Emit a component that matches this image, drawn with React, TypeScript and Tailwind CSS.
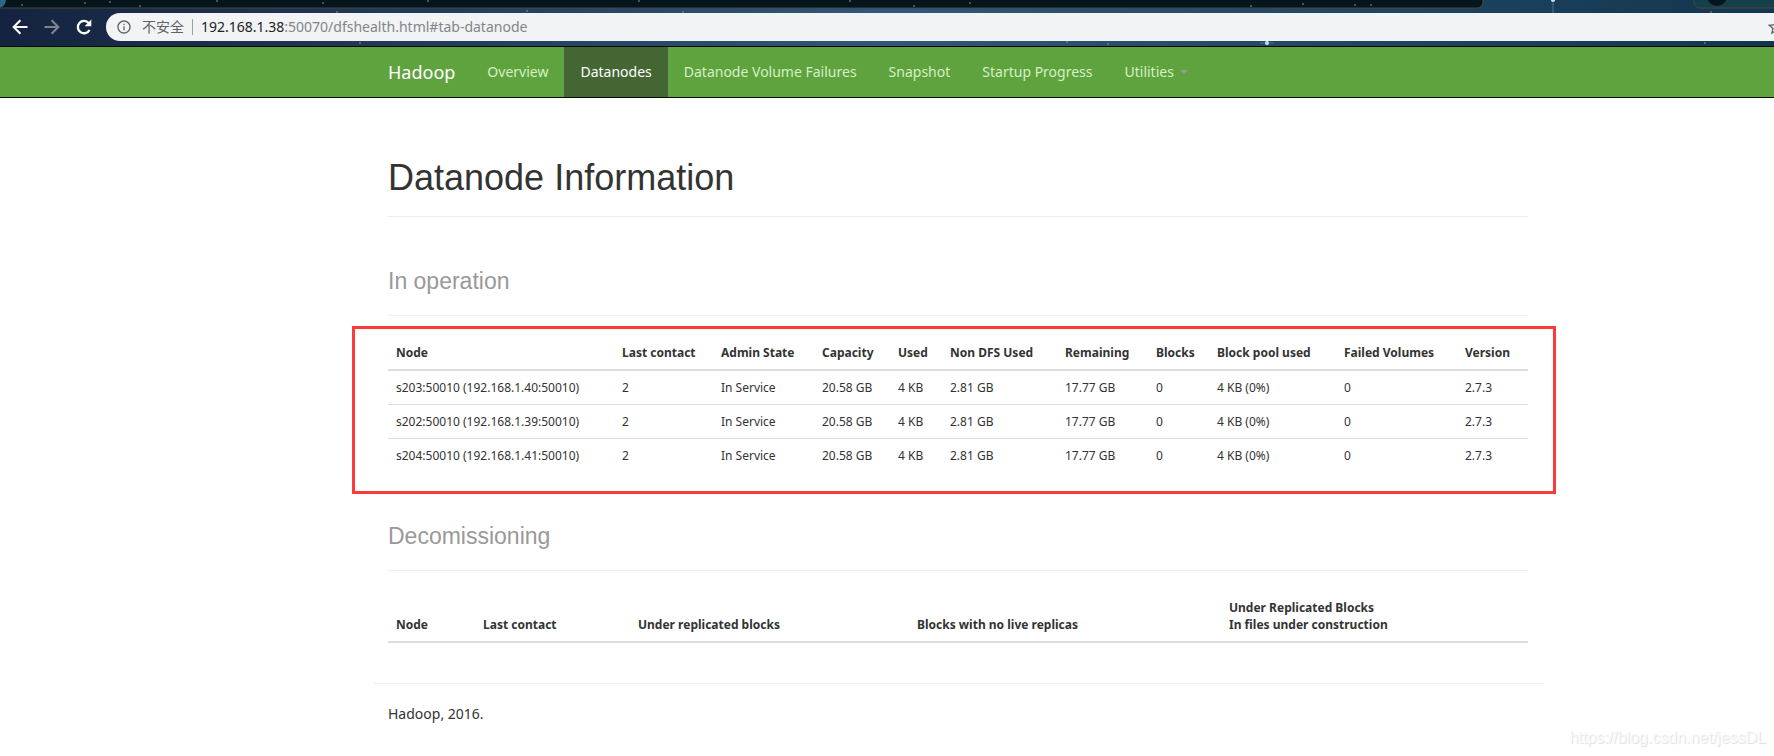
import clsx from 'clsx';

interface Star {
  x: number;
  y: number;
  r: number;
}

const stars: Star[] = [
  { x: 22, y: 5, r: 1 },
  { x: 85, y: 3, r: 1 },
  { x: 110, y: 2, r: 1 },
  { x: 140, y: 6, r: 1 },
  { x: 217, y: 1, r: 1 },
  { x: 323, y: 3, r: 1 },
  { x: 337, y: 12, r: 1 },
  { x: 360, y: 43, r: 1 },
  { x: 428, y: 1, r: 1 },
  { x: 527, y: 11, r: 1 },
  { x: 639, y: 1, r: 1 },
  { x: 683, y: 12, r: 1 },
  { x: 850, y: 1, r: 1 },
  { x: 914, y: 6, r: 1 },
  { x: 970, y: 3, r: 1 },
  { x: 1067, y: 42, r: 1 },
  { x: 1108, y: 44, r: 1 },
  { x: 1251, y: 6, r: 1 },
  { x: 1303, y: 4, r: 1 },
  { x: 1355, y: 5, r: 1 },
  { x: 1371, y: 5, r: 1 },
  { x: 1711, y: 12, r: 1 },
  { x: 1705, y: 43, r: 1 },
];

const navItems = [
  { label: 'Overview', href: '#tab-overview' },
  { label: 'Datanodes', href: '#tab-datanode' },
  { label: 'Datanode Volume Failures', href: '#tab-datanode-volume-failures' },
  { label: 'Snapshot', href: '#tab-snapshot' },
  { label: 'Startup Progress', href: '#tab-startup-progress' },
];

const operationColumns = [
  { label: 'Node', width: 'w-[226px]' },
  { label: 'Last contact', width: 'w-[99px]' },
  { label: 'Admin State', width: 'w-[101px]' },
  { label: 'Capacity', width: 'w-[76px]' },
  { label: 'Used', width: 'w-[52px]' },
  { label: 'Non DFS Used', width: 'w-[115px]' },
  { label: 'Remaining', width: 'w-[91px]' },
  { label: 'Blocks', width: 'w-[61px]' },
  { label: 'Block pool used', width: 'w-[127px]' },
  { label: 'Failed Volumes', width: 'w-[121px]' },
  { label: 'Version', width: 'w-[71px]' },
];

const nodes = [
  's203:50010 (192.168.1.40:50010)',
  's202:50010 (192.168.1.39:50010)',
  's204:50010 (192.168.1.41:50010)',
];

const nodeStats = ['2', 'In Service', '20.58 GB', '4 KB', '2.81 GB', '17.77 GB', '0', '4 KB (0%)', '0', '2.7.3'];

const decommissionColumns = [
  { label: 'Node', width: 'w-[87px]' },
  { label: 'Last contact', width: 'w-[155px]' },
  { label: 'Under replicated blocks', width: 'w-[279px]' },
  { label: 'Blocks with no live replicas', width: 'w-[312px]' },
  { label: 'Under Replicated Blocks\nIn files under construction', width: 'w-[307px]' },
];

function BrowserBar() {
  return (
    <div className="relative overflow-hidden bg-linear-to-r from-[#14233f] via-[#30587a] to-[#12364f]">
      {/* Night sky theme behind the tabs and toolbar */}
      <svg className="absolute inset-0 h-full w-full" aria-hidden="true">
        <rect x="-10" y="-10" width="1493" height="18" rx="6" fill="#04151c" stroke="#4a4644" />
        <rect x="1694" y="-10" width="200" height="18" rx="6" fill="#14404a" stroke="#4a4644" />
        <circle cx="1717" cy="-4" r="10" fill="#04151c" />
        <circle cx="-2" cy="0" r="8" fill="#2f6683" />
        {stars.map((star) => (
          <circle key={`${star.x}-${star.y}`} cx={star.x} cy={star.y} r={star.r} fill="#8a8f78" opacity="0.7" />
        ))}
        <circle cx="1553" cy="0" r="2" fill="#e6f4fb" />
        <circle cx="1267" cy="43" r="2" fill="#e6f4fb" />
        <path d="M1260 43h14M1553 0v13" stroke="#6f9fbd" strokeWidth="1" opacity="0.5" />
      </svg>
      <div className="relative flex items-center pt-[13px] pb-[5px]">
        <div className="flex w-[106px] items-center gap-3 pl-[10px]">
          <button type="button" aria-label="Back" className="text-white">
            <svg className="h-5 w-5" viewBox="0 0 24 24" fill="none" stroke="currentColor" strokeWidth="2.6">
              <path d="M21 12H5M12.5 4L4.5 12l8 8" />
            </svg>
          </button>
          <button type="button" aria-label="Forward" className="text-[#7d8390]">
            <svg className="h-5 w-5" viewBox="0 0 24 24" fill="none" stroke="currentColor" strokeWidth="2.6">
              <path d="M3 12h16M11.5 4l8 8-8 8" />
            </svg>
          </button>
          <button type="button" aria-label="Reload" className="text-white">
            <svg className="h-5 w-5" viewBox="0 0 24 24" fill="none" stroke="currentColor" strokeWidth="2.8">
              <path d="M18.6 15.5A7.4 7.4 0 1 1 17.6 7.2L19 8.6" />
              <path d="M20.8 3v8h-8z" fill="currentColor" stroke="none" />
            </svg>
          </button>
        </div>
        <div className="flex h-7 flex-1 items-center overflow-hidden rounded-l-full bg-[#f1f3f4] pl-[10px] text-sm whitespace-nowrap">
          <svg className="h-4 w-4 text-[#5f6368]" viewBox="0 0 24 24" fill="currentColor">
            <path d="M11 17h2v-6h-2v6zm1-15C6.48 2 2 6.48 2 12s4.48 10 10 10 10-4.48 10-10S17.52 2 12 2zm0 18c-4.41 0-8-3.59-8-8s3.59-8 8-8 8 3.59 8 8-3.59 8-8 8zM11 9h2V7h-2v2z" />
          </svg>
          <span className="ml-[10px] text-[#5f6368]">不安全</span>
          <span className="mx-2 h-4 w-px bg-[#9aa0a6]" />
          <span className="text-[#202124]">192.168.1.38</span>
          <span className="text-[#80868b]">:50070/dfshealth.html#tab-datanode</span>
        </div>
        <button type="button" aria-label="Bookmark" className="h-7 w-2 overflow-hidden bg-[#f1f3f4] text-[#5f6368]">
          <svg className="h-5 w-5" viewBox="0 0 24 24" fill="currentColor">
            <path d="M22 9.24l-7.19-.62L12 2 9.19 8.63 2 9.24l5.46 4.73L5.82 21 12 17.27 18.18 21l-1.63-7.03L22 9.24zM12 15.4l-3.76 2.27 1-4.28-3.32-2.88 4.38-.38L12 6.1l1.71 4.04 4.38.38-3.32 2.88 1 4.28L12 15.4z" />
          </svg>
        </button>
      </div>
    </div>
  );
}

function Navbar() {
  return (
    <nav className="border-y border-[#080808] bg-[#5fa33e] pl-[142px]">
      <div className="mx-auto flex max-w-[1170px] text-sm leading-5 text-[#d4f0c6]">
        <a href="#top" className="py-[15px] pr-4 pl-[15px] text-lg leading-5 text-white">
          Hadoop
        </a>
        {navItems.map((item) => (
          <a
            key={item.label}
            href={item.href}
            className={clsx(
              'px-4 py-[15px] leading-5 whitespace-nowrap',
              item.label === 'Datanodes' && 'bg-[#446633] text-white'
            )}
          >
            {item.label}
          </a>
        ))}
        <button type="button" className="flex items-center gap-[6px] px-4 py-[15px]">
          Utilities
          <span className="border-x-4 border-t-4 border-x-transparent border-t-[#999999]" />
        </button>
      </div>
    </nav>
  );
}

export default function App() {
  return (
    <div className="relative min-h-screen bg-white font-['Noto_Sans','Noto_Sans_CJK_SC',sans-serif] text-sm leading-5 text-[#333333]">
      <BrowserBar />
      <Navbar />

      <div className="pl-[142px]">
        <div className="mx-auto max-w-[1170px]">
          <main className="px-[15px] pt-[60px]">
            <h1 className="border-b border-[#eeeeee] pb-[18px] font-['Liberation_Sans',sans-serif] text-4xl leading-10">
              Datanode Information
            </h1>

            <h2 className="mt-[50px] border-b border-[#eeeeee] pb-5 font-['Liberation_Sans',sans-serif] text-[23px] leading-7 text-[#999999]">
              In operation
            </h2>
            <section className="mt-[10px] -mr-7 -ml-9 border-3 border-[#ff3838] pt-[7px] pr-[25px] pb-[19px] pl-[33px]">
              <table className="w-full table-fixed border-collapse text-left text-xs leading-[17px] whitespace-nowrap">
                <thead>
                  <tr className="border-b-2 border-[#dddddd]">
                    {operationColumns.map((column) => (
                      <th key={column.label} className={clsx('p-2 font-bold', column.width)}>
                        {column.label}
                      </th>
                    ))}
                  </tr>
                </thead>
                <tbody>
                  {nodes.map((node) => (
                    <tr key={node} className="border-b border-[#dddddd] last:border-b-0">
                      <td className="p-2">{node}</td>
                      {nodeStats.map((value, index) => (
                        <td key={index} className="p-2">
                          {value}
                        </td>
                      ))}
                    </tr>
                  ))}
                </tbody>
              </table>
            </section>

            <h2 className="mt-7 border-b border-[#eeeeee] pb-5 font-['Liberation_Sans',sans-serif] text-[23px] leading-7 text-[#999999]">
              Decomissioning
            </h2>
            <table className="mt-5 w-full table-fixed border-collapse text-left text-xs leading-[17px]">
              <thead>
                <tr className="border-b-2 border-[#dddddd]">
                  {decommissionColumns.map((column) => (
                    <th key={column.label} className={clsx('p-2 align-bottom font-bold whitespace-pre', column.width)}>
                      {column.label}
                    </th>
                  ))}
                </tr>
              </thead>
            </table>
          </main>

          <footer className="mt-10 border-t border-[#eeeeee] px-[15px] pt-5 pb-8">
            <p>Hadoop, 2016.</p>
          </footer>
        </div>
      </div>

      <span className="absolute right-2 bottom-[6px] font-['Liberation_Sans',sans-serif] text-base text-[#fafafa] [text-shadow:1px_1px_1px_#dddddd]">
        https://blog.csdn.net/jessDL
      </span>
    </div>
  );
}
